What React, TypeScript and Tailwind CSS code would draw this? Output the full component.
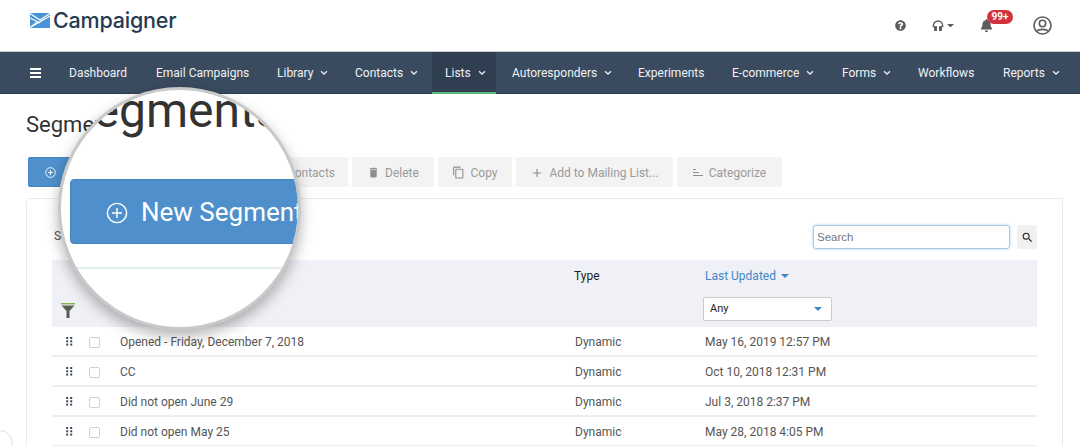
import React from "react";
import { FaQuestionCircle, FaBell } from "react-icons/fa";
import { MdDelete, MdContentCopy, MdAdd, MdSearch } from "react-icons/md";

const Chevron = () => (
  <svg width="8" height="6" viewBox="0 0 8 6" className="ml-[7px]" fill="none" stroke="#e8edf2" strokeWidth="1.3">
    <path d="M1 1.2 L4 4 L7 1.2" />
  </svg>
);

const CirclePlus = ({ size, color, sw }: { size: number; color: string; sw: number }) => (
  <svg width={size} height={size} viewBox="0 0 24 24" fill="none" stroke={color} strokeWidth={sw}>
    <circle cx="12" cy="12" r="10.5" />
    <path d="M12 6.5V17.5M6.5 12H17.5" />
  </svg>
);

const Dots = () => (
  <svg width="7" height="9" viewBox="0 0 7 9" fill="#3b4756">
    {[0, 3.3, 6.6].map((y) => (
      <g key={y}>
        <rect x="0.2" y={y} width="2" height="2" />
        <rect x="4.2" y={y} width="2" height="2" />
      </g>
    ))}
  </svg>
);

const Caret = ({ color, w = 8 }: { color: string; w?: number }) => (
  <svg width={w} height={w / 2} viewBox="0 0 8 4" fill={color}>
    <path d="M0 0H8L4 4Z" />
  </svg>
);

const nav = [
  ["Dashboard", false, "w-[87px]"],
  ["Email Campaigns", false, "w-[121px]"],
  ["Library", true, "w-[78px]"],
  ["Contacts", true, "w-[90px]"],
  ["Lists", true, "w-[64px]"],
  ["Autoresponders", true, "w-[126px] ml-[3px]"],
  ["Experiments", false, "w-[94px]"],
  ["E-commerce", true, "w-[110px]"],
  ["Forms", true, "w-[76px]"],
  ["Workflows", false, "w-[85px]"],
  ["Reports", true, "w-[77px]"],
] as const;

const rows = [
  ["Opened - Friday, December 7, 2018", "Dynamic", "May 16, 2019 12:57 PM"],
  ["CC", "Dynamic", "Oct 10, 2018 12:31 PM"],
  ["Did not open June 29", "Dynamic", "Jul 3, 2018 2:37 PM"],
  ["Did not open May 25", "Dynamic", "May 28, 2018 4:05 PM"],
];

const GrayBtn = ({ icon, label, w, end }: { icon: React.ReactNode; label: string; w: string; end?: boolean }) => (
  <div className={`${w} h-[30px] shrink-0 rounded-[2px] bg-[#f3f3f3] flex items-center ${end ? "justify-end pr-[13px]" : "justify-center"} gap-[5px] pt-px text-[#9a9a9a] text-[12px] whitespace-nowrap`}>
    {icon}
    <span>{label}</span>
  </div>
);

export default function App() {
  return (
    <div className="relative w-[1080px] h-[446px] overflow-hidden bg-white font-['Roboto',sans-serif]">
      <header className="h-[51px] flex items-center justify-between pl-[30px] pr-[28px]">
        <div className="flex items-center gap-[3px] -mt-[9px]">
          <svg width="20" height="15" viewBox="0 0 20 15" className="-mt-[1px]">
            <rect width="20" height="15" fill="#4a93d6" />
            <path d="M0 0.5 L10 7 L20 0.5 M0 5 L10 10 M0 14.5 L8 8.5 M20 3 L7 10.5 L0 14.5" stroke="#fff" strokeWidth="1.1" fill="none" />
          </svg>
          <span className="font-['Inter',sans-serif] font-medium text-[21.5px] leading-none text-[#263a50] tracking-[-0.2px]">Campaigner</span>
        </div>
        <div className="flex items-center">
          <FaQuestionCircle className="text-[#5c5c5c] text-[11px]" />
          <div className="ml-[26px] flex items-center gap-[3px]">
            <svg width="12" height="11" viewBox="0 0 13 12" fill="none" stroke="#5c5c5c" strokeWidth="1.6">
              <path d="M1.5 8 V6 a5 5 0 0 1 10 0 V8" />
              <rect x="3" y="7.5" width="1.6" height="3.6" fill="#5c5c5c" />
              <rect x="8.4" y="7.5" width="1.6" height="3.6" fill="#5c5c5c" />
            </svg>
            <Caret color="#5c5c5c" w={7} />
          </div>
          <div className="relative ml-[26px]">
            <FaBell className="text-[#5c5c5c] text-[13px]" />
            <span className="absolute left-[7px] top-[-9px] h-[14px] w-[26px] rounded-full bg-[#d2333d] text-white text-[10px] font-bold leading-[14px] text-center">99+</span>
          </div>
          <svg width="19" height="19" viewBox="0 0 19 19" fill="none" stroke="#5c5c5c" strokeWidth="1.6" className="ml-[40px]">
            <circle cx="9.5" cy="9.5" r="8.5" />
            <circle cx="9.5" cy="7.5" r="3.2" />
            <path d="M3.8 15.5 C5 12.6 14 12.6 15.2 15.5" />
          </svg>
        </div>
      </header>

      <nav className="h-[43px] bg-[#3a4b5f] border-t border-[#c9cfd6] border-b-[#2d3d52] border-b flex items-stretch pl-[30px] text-[12px] text-[#eef1f4]">
        <div className="w-[26px] flex items-center">
          <div className="w-[11px] flex flex-col gap-[2px]">
            <div className="h-[2px] bg-white" />
            <div className="h-[2px] bg-white" />
            <div className="h-[2px] bg-white" />
          </div>
        </div>
        {nav.map(([label, chev, w]) => (
          <div
            key={label}
            className={`${w} shrink-0 flex items-center pl-[13px] pt-px whitespace-nowrap ${label === "Lists" ? "bg-[#2f3e50] border-b-2 border-[#5cb87a] -mb-px" : ""}`}
          >
            <span>{label}</span>
            {chev && <Chevron />}
          </div>
        ))}
      </nav>

      <main className="px-[26px] pr-[17px]">
        <h1 className="mt-[17px] h-[28px] text-[22px] leading-[28px] text-[#333]">Segments</h1>
        <div className="mt-[18px] flex gap-[4px] pl-[2px]">
          <div className="w-[119px] h-[30px] shrink-0 rounded-[2px] bg-[#4f90cc] border border-[#4484c0] flex items-center pl-[16px] gap-[8px] text-white text-[12px]">
            <CirclePlus size={11} color="#fff" sw={2} />
            <span>New Segment</span>
          </div>
          <GrayBtn w="w-[197px]" end icon={null} label="Add to Contacts" />
          <GrayBtn w="w-[82px]" icon={<MdDelete className="text-[13px] text-[#8f8f8f]" />} label="Delete" />
          <GrayBtn w="w-[74px]" icon={<MdContentCopy className="text-[13px] text-[#8f8f8f]" />} label="Copy" />
          <GrayBtn w="w-[157px]" icon={<MdAdd className="text-[14px] text-[#8f8f8f]" />} label="Add to Mailing List..." />
          <GrayBtn
            w="w-[105px]"
            icon={
              <svg width="10" height="7" viewBox="0 0 10 7" stroke="#8f8f8f" strokeWidth="1" className="mr-[1px]">
                <path d="M0 .5H3M0 3.5H6M0 6.5H10" />
              </svg>
            }
            label="Categorize"
          />
        </div>

        <section className="mt-[11px] h-[300px] rounded-t-[3px] border border-[#e4eeee] px-[25px]">
          <div className="h-[61px] flex items-center justify-between">
            <span className="ml-[2px] text-[12px] text-[#555] mt-[13px]">Segments</span>
            <div className="flex items-center gap-[7px] mt-[15px]">
              <div className="w-[197px] h-[24px] rounded-[3px] border border-[#a9c8e2] shadow-[0_0_3px_#a9cbe8] pl-[3px] pt-px flex items-center text-[11.5px] text-[#757575] font-['Liberation_Sans',sans-serif]">Search</div>
              <div className="w-[20px] h-[24px] rounded-[2px] bg-[#f0f0f0] flex items-center justify-center">
                <MdSearch className="text-[13px] text-[#222]" />
              </div>
            </div>
          </div>
          <div className="h-[67px] bg-[#eff1f6] flex text-[12px]">
            <div className="w-[522px] flex items-end pl-[9px] pb-[9px]">
              <svg width="14" height="15" viewBox="0 0 14 15">
                <rect width="14" height="1.4" fill="#7ab648" />
                <path d="M0.5 2.6H13.5L8.5 8V15H5.5V8Z" fill="#5b5b50" />
              </svg>
            </div>
            <div className="w-[131px] pt-[7px] text-[#222]">
              <span>Type</span>
            </div>
            <div className="flex flex-col pt-[7px]">
              <div className="flex items-center gap-[5px] text-[#3f86c7]">
                <span>Last Updated</span>
                <Caret color="#3f86c7" />
              </div>
              <div className="mt-[12px] -ml-[2px] w-[129px] h-[24px] bg-white rounded-[2px] border border-[#c9ccd1] flex items-center justify-between pl-[6px] pr-[9px] text-[11px] text-[#222]">
                <span>Any</span>
                <Caret color="#3f86c7" />
              </div>
            </div>
          </div>
          {rows.map(([name, type, date]) => (
            <div key={name} className="h-[30px] flex items-center pt-[2px] border-b-2 border-[#eeeeee] text-[12px] text-[#555]">
              <div className="w-[37px] pl-[14px] -mt-[2px]"><Dots /></div>
              <div className="w-[31px]">
                <div className="w-[11px] h-[11px] rounded-[2px] border border-[#d0d0d0]" />
              </div>
              <div className="w-[455px]">{name}</div>
              <div className="w-[130px]">{type}</div>
              <div>{date}</div>
            </div>
          ))}
        </section>
      </main>

      <div className="absolute left-[-14px] top-[430px] w-[27px] h-[27px] rounded-full border border-[#ddd] bg-white" />

      <div className="absolute left-[58px] top-[87px] w-[243px] h-[243px] rounded-full overflow-hidden bg-white border-[3px] border-[#c9c9c9] shadow-[0_6px_14px_rgba(0,0,0,0.3)]">
        <div className="absolute left-[4px] top-[-9px] text-[48px] leading-[60px] text-[#333] whitespace-nowrap">Segments</div>
        <div className="absolute left-[9px] top-[89px] w-[280px] h-[65px] rounded-[4px] bg-[#4f90cc] border border-[#4484c0] flex items-center pl-[35px] pt-[2px] gap-[13px] text-white text-[26px]">
          <CirclePlus size={22} color="#fff" sw={1.6} />
          <span>New Segment</span>
        </div>
        <div className="absolute left-0 top-[177px] w-full h-[2px] bg-[#e4eeee]" />
      </div>
    </div>
  );
}
